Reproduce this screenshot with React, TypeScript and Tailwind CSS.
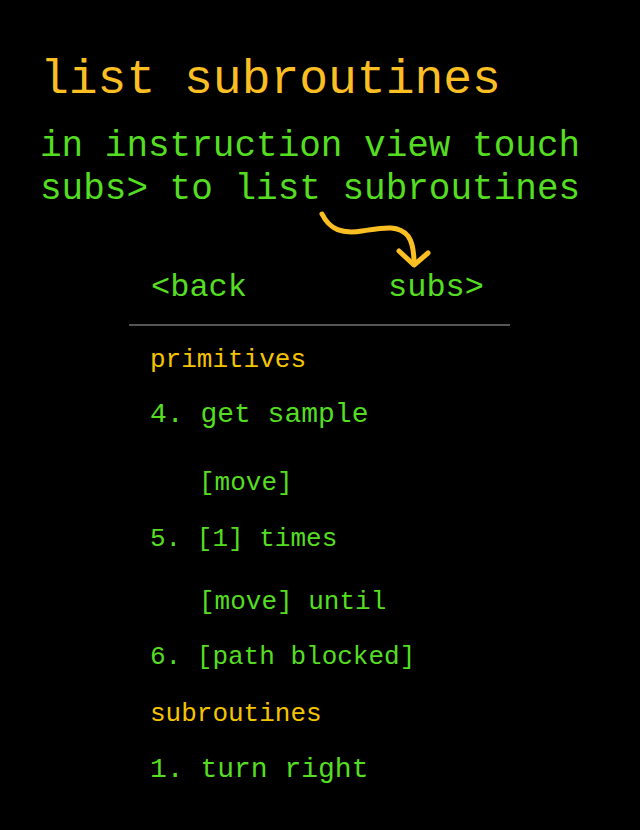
const mono = {
  fontFamily: '"Courier New", Courier, "Nimbus Mono PS", "Nimbus Mono L", FreeMono, "Liberation Mono", monospace',
};

function CurvedArrow() {
  return (
    <svg
      className="absolute left-[310px] top-[205px] h-[70px] w-[130px]"
      viewBox="310 205 130 70"
      fill="none"
      stroke="#fbbf24"
      strokeWidth={5}
      strokeLinecap="round"
      strokeLinejoin="round"
    >
      <path d="M322 214 C 330 230, 342 234, 362 231 C 382 228, 398 224, 408 236 C 413 243, 414 252, 414 263" />
      <path d="M399 251 L414 265 L428 253" />
    </svg>
  );
}

export default function App() {
  return (
    <div className="relative h-[830px] w-[640px] overflow-hidden bg-black" style={mono}>
      {/* Heading */}
      <div className="pl-[40px] pt-[56px]">
        <h1 className="text-[48px] leading-[48px] text-[#fbbf24]">list subroutines</h1>
        <p className="mt-[21px] text-[36px] leading-[43px] text-[#55dd22]">
          in instruction view touch
          <br />
          subs&gt; to list subroutines
        </p>
      </div>

      <CurvedArrow />

      {/* Phone panel */}
      <div className="ml-[129px] mt-[61px] w-[381px]">
        <div className="flex justify-between border-b-2 border-[#555] pb-[20px] pl-[22px] pr-[26px] text-[32px] leading-[32px] text-[#55dd22]">
          <span>&lt;back</span>
          <span>subs&gt;</span>
        </div>

        <div className="pl-[21px] text-[#55dd22]">
          <div className="mt-[21px] text-[26px] leading-[26px] text-[#f5c400]">primitives</div>
          <div className="mt-[28px] text-[28px] leading-[28px]">4. get sample</div>
          <div className="mt-[41px] pl-[49px] text-[26px] leading-[26px]">[move]</div>
          <div className="mt-[30px] text-[26px] leading-[26px]">5. [1] times</div>
          <div className="mt-[37px] pl-[49px] text-[26px] leading-[26px]">[move] until</div>
          <div className="mt-[29px] text-[26px] leading-[26px]">6. [path blocked]</div>
          <div className="mt-[31px] text-[26px] leading-[26px] text-[#f5c400]">subroutines</div>
          <div className="mt-[29px] text-[28px] leading-[28px]">1. turn right</div>
        </div>
      </div>
    </div>
  );
}
